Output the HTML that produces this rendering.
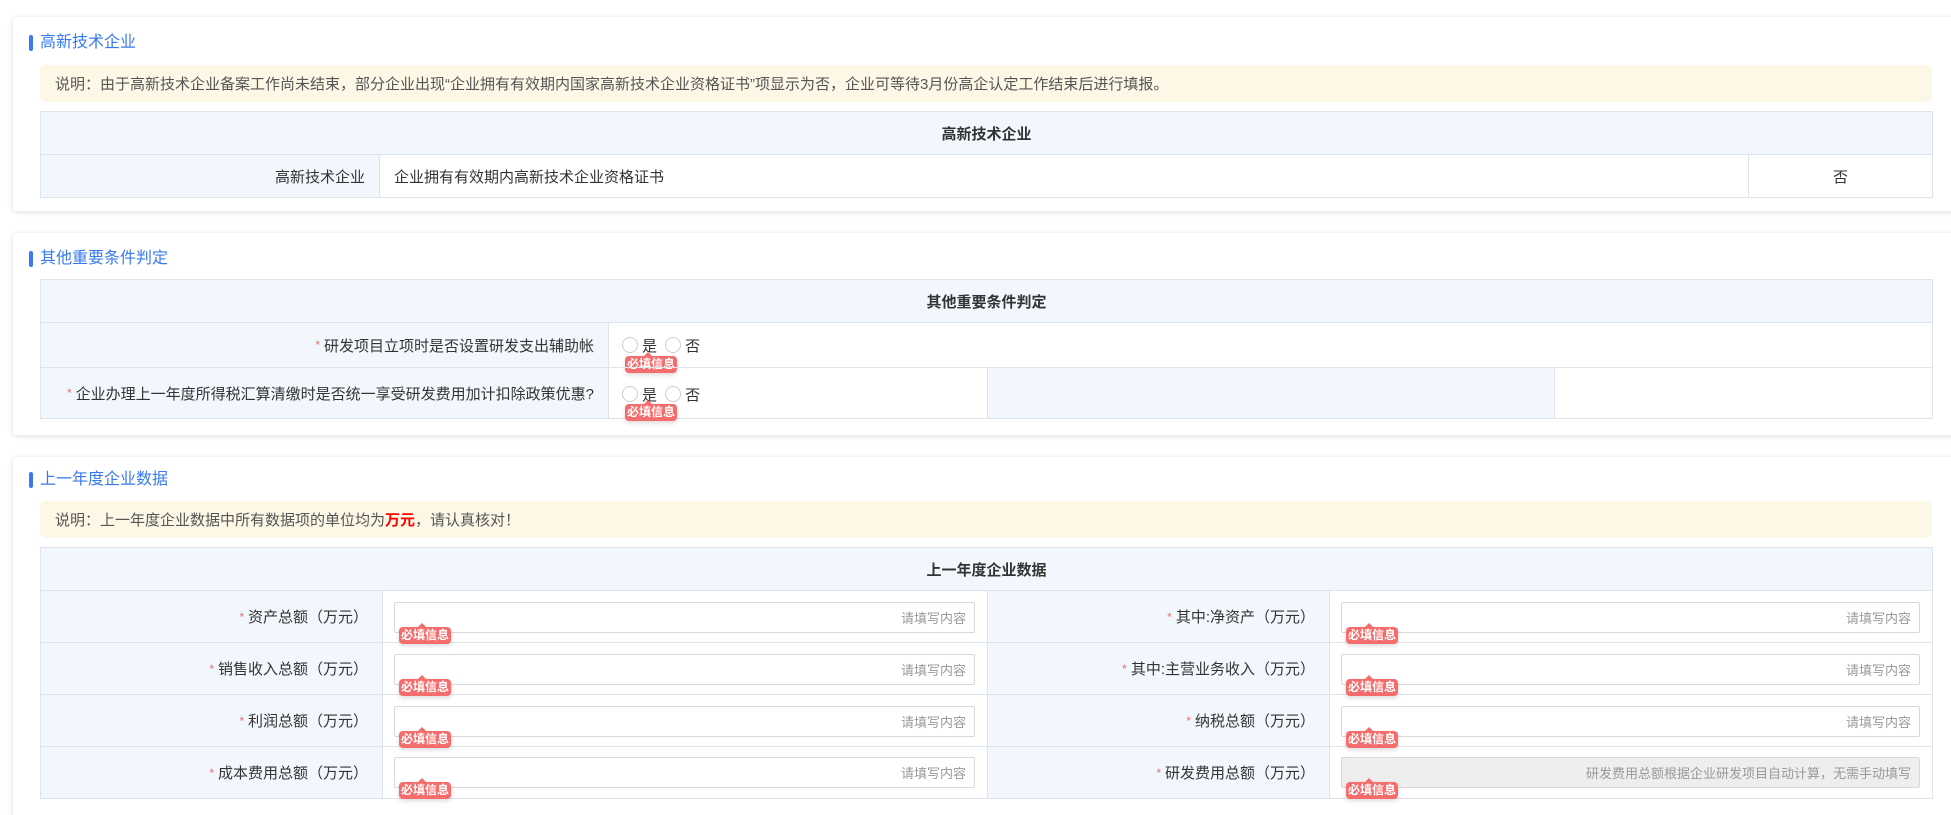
<!DOCTYPE html>
<html style="width:1951px;height:815px;overflow:hidden"><head><meta charset="utf-8">
<style>
*{box-sizing:border-box;margin:0;padding:0}
html,body{width:1951px;height:815px;overflow:hidden}
body{background:#fff;font-family:"Liberation Sans","Noto Sans CJK SC",sans-serif;color:#333;position:relative}
.card{position:absolute;left:13px;right:-10px;background:#fff;border-radius:4px;box-shadow:0 1px 6px rgba(0,0,0,.13)}
.ttl{position:absolute;left:40px;font-size:16px;color:#3a7af0;line-height:20px}
.ttl:before{content:"";position:absolute;left:-11px;top:2px;width:4px;height:16px;background:#3a7af0;border-radius:2px}
.note{position:absolute;left:40px;width:1892px;background:#fdf7e6;border-radius:6px;font-size:15px;color:#555;padding-left:15px;display:flex;align-items:center}
.c{position:absolute;border:1px solid #dfe3ea;font-size:15px;display:flex;align-items:center}
.lb{background:#f2f7fe;justify-content:flex-end;padding-right:14px}
.hd{background:#f2f7fe;justify-content:center;font-weight:bold}
.st{color:#f56c6c;font-size:12px;margin-right:4px}
.inp{position:absolute;border:1px solid #d9d9d9;border-radius:2px;height:31px;background:#fff;font-size:13px;color:#999;display:flex;align-items:center;justify-content:flex-end;padding-right:8px}
.bd{position:absolute;width:52px;height:17px;background:#f56c6c;color:#fff;font-size:12px;font-weight:bold;border-radius:4px;text-align:center;line-height:17px;box-shadow:0 2px 5px rgba(0,0,0,.15)}
.bd:before{content:"";position:absolute;left:19px;top:-4px;border:4px solid transparent;border-top:0;border-bottom-color:#f56c6c}
.rd{display:inline-block;width:16px;height:16px;border:1px solid #ccc;border-radius:50%;vertical-align:-3px;margin-right:4px}
</style></head><body>

<div class="card" style="top:17px;height:194px"></div>
<div class="ttl" style="top:33px">高新技术企业</div>
<div class="note" style="top:65px;height:37px">说明：由于高新技术企业备案工作尚未结束，部分企业出现“企业拥有有效期内国家高新技术企业资格证书”项显示为否，企业可等待3月份高企认定工作结束后进行填报。</div>
<div class="c hd" style="left:40px;top:111px;width:1893px;height:44px">高新技术企业</div>
<div class="c lb" style="left:40px;top:154px;width:340px;height:44px">高新技术企业</div>
<div class="c" style="left:379px;top:154px;width:1370px;height:44px;padding-left:14px">企业拥有有效期内高新技术企业资格证书</div>
<div class="c" style="left:1748px;top:154px;width:185px;height:44px;justify-content:center">否</div>

<div class="card" style="top:233px;height:202px"></div>
<div class="ttl" style="top:249px">其他重要条件判定</div>
<div class="c hd" style="left:40px;top:279px;width:1893px;height:44px">其他重要条件判定</div>
<div class="c lb" style="left:40px;top:322px;width:569px;height:46px"><span class="st">*</span>研发项目立项时是否设置研发支出辅助帐</div>
<div class="c" style="left:608px;top:322px;width:1325px;height:46px;padding-left:13px"><span class="rd"></span>是&nbsp;<span class="rd" style="margin-left:4px"></span>否</div>
<div class="bd" style="left:625px;top:356px">必填信息</div>
<div class="c lb" style="left:40px;top:367px;width:569px;height:52px"><span class="st">*</span>企业办理上一年度所得税汇算清缴时是否统一享受研发费用加计扣除政策优惠?</div>
<div class="c" style="left:608px;top:367px;width:380px;height:52px;padding-left:13px;padding-top:2px"><span class="rd"></span>是&nbsp;<span class="rd" style="margin-left:4px"></span>否</div>
<div class="bd" style="left:625px;top:404px">必填信息</div>
<div class="c lb" style="left:987px;top:367px;width:568px;height:52px"></div>
<div class="c" style="left:1554px;top:367px;width:379px;height:52px"></div>

<div class="card" style="top:457px;height:370px"></div>
<div class="ttl" style="top:470px">上一年度企业数据</div>
<div class="note" style="top:501px;height:37px">说明：上一年度企业数据中所有数据项的单位均为<b style="color:#f00">万元</b>，请认真核对！</div>
<div class="c hd" style="left:40px;top:547px;width:1893px;height:44px">上一年度企业数据</div>

<div class="c lb" style="left:40px;top:590px;width:343px;height:53px"><span class="st">*</span>资产总额（万元）</div>
<div class="c" style="left:382px;top:590px;width:606px;height:53px"></div>
<div class="c lb" style="left:987px;top:590px;width:343px;height:53px"><span class="st">*</span>其中:净资产（万元）</div>
<div class="c" style="left:1329px;top:590px;width:604px;height:53px"></div>

<div class="c lb" style="left:40px;top:642px;width:343px;height:53px"><span class="st">*</span>销售收入总额（万元）</div>
<div class="c" style="left:382px;top:642px;width:606px;height:53px"></div>
<div class="c lb" style="left:987px;top:642px;width:343px;height:53px"><span class="st">*</span>其中:主营业务收入（万元）</div>
<div class="c" style="left:1329px;top:642px;width:604px;height:53px"></div>

<div class="c lb" style="left:40px;top:694px;width:343px;height:53px"><span class="st">*</span>利润总额（万元）</div>
<div class="c" style="left:382px;top:694px;width:606px;height:53px"></div>
<div class="c lb" style="left:987px;top:694px;width:343px;height:53px"><span class="st">*</span>纳税总额（万元）</div>
<div class="c" style="left:1329px;top:694px;width:604px;height:53px"></div>

<div class="c lb" style="left:40px;top:746px;width:343px;height:53px"><span class="st">*</span>成本费用总额（万元）</div>
<div class="c" style="left:382px;top:746px;width:606px;height:53px"></div>
<div class="c lb" style="left:987px;top:746px;width:343px;height:53px"><span class="st">*</span>研发费用总额（万元）</div>
<div class="c" style="left:1329px;top:746px;width:604px;height:53px"></div>

<div class="inp" style="left:394px;top:602px;width:581px">请填写内容</div>
<div class="inp" style="left:1341px;top:602px;width:579px">请填写内容</div>
<div class="inp" style="left:394px;top:654px;width:581px">请填写内容</div>
<div class="inp" style="left:1341px;top:654px;width:579px">请填写内容</div>
<div class="inp" style="left:394px;top:706px;width:581px">请填写内容</div>
<div class="inp" style="left:1341px;top:706px;width:579px">请填写内容</div>
<div class="inp" style="left:394px;top:757px;width:581px">请填写内容</div>
<div class="inp" style="left:1341px;top:757px;width:579px;background:#eee;color:#999">研发费用总额根据企业研发项目自动计算，无需手动填写</div>

<div class="bd" style="left:399px;top:627px">必填信息</div>
<div class="bd" style="left:1346px;top:627px">必填信息</div>
<div class="bd" style="left:399px;top:679px">必填信息</div>
<div class="bd" style="left:1346px;top:679px">必填信息</div>
<div class="bd" style="left:399px;top:731px">必填信息</div>
<div class="bd" style="left:1346px;top:731px">必填信息</div>
<div class="bd" style="left:399px;top:782px">必填信息</div>
<div class="bd" style="left:1346px;top:782px">必填信息</div>
</body></html>
